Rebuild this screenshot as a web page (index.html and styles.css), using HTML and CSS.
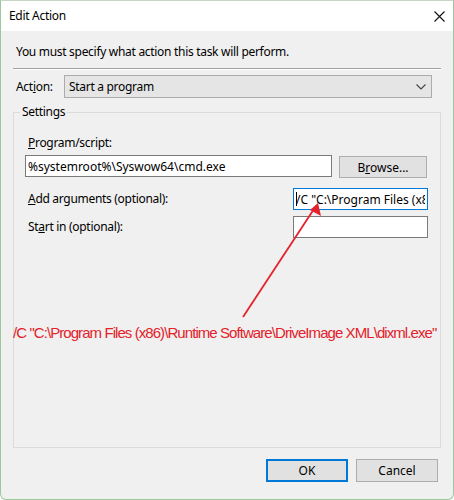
FILE: index.html
```html
<!DOCTYPE html>
<html lang="en">
<head>
    <meta charset="UTF-8">
    <meta name="viewport" content="width=device-width, initial-scale=1.0">
    <title>Edit Action</title>
    <link rel="stylesheet" href="styles.css">
</head>
<body>
   <div class="window">
     <div class="titlebar">
        <span class="title">Edit Action</span>
        <svg class="close" width="11" height="11" viewBox="0 0 11 11">
            <path d="M0.5 0.5 L10.5 10.5 M10.5 0.5 L0.5 10.5" stroke="#111" stroke-width="1.1" fill="none"/>
        </svg>
     </div>
     <div class="content">
        <p class="message">You must specify what action this task will perform.</p>
        <div class="sep"></div>
        <div class="action-row">
            <span class="action-label">Act<u>i</u>on:</span>
            <div class="dropdown">
                <span>Start a program</span>
                <svg width="10" height="6" viewBox="0 0 10 6">
                    <path d="M0.5 0.5 L5 5 L9.5 0.5" stroke="#444" stroke-width="1.1" fill="none"/>
                </svg>
            </div>
        </div>
        <fieldset class="settings">
            <legend>Settings</legend>
            <div class="field-label"><u>P</u>rogram/script:</div>
            <div class="program-row">
                <input class="textbox wide" type="text" value="%systemroot%\Syswow64\cmd.exe">
                <button class="btn browse">B<u>r</u>owse...</button>
            </div>
            <div class="arg-row first">
                <span class="field-label"><u>A</u>dd arguments (optional):</span>
                <span class="caret-wrap">
                    <input class="textbox short focused" type="text" value="/C &quot;C:\Program Files (x86)\Runtime Software\DriveImage XML\dixml.exe&quot;">
                </span>
            </div>
            <div class="arg-row">
                <span class="field-label">St<u>a</u>rt in (optional):</span>
                <input class="textbox short" type="text" value="">
            </div>
        </fieldset>
        <div class="buttons">
            <button class="btn ok">OK</button>
            <button class="btn">Cancel</button>
        </div>
     </div>

     <!-- annotation drawn over the screenshot -->
     <svg class="arrow" width="454" height="500" viewBox="0 0 454 500">
        <line x1="243" y1="317" x2="314" y2="209" stroke="#e3222b" stroke-width="1.8"/>
        <polygon points="318,203 321,216 310,210" fill="#e3222b"/>
     </svg>
     <div class="note">/C "C:\Program Files (x86)\Runtime Software\DriveImage XML\dixml.exe"</div>
   </div>
</body>
</html>
```

FILE: styles.css
```css
*{
    margin: 0;
    padding: 0;
    box-sizing: border-box;
}
body{
    background-color: #ffffff;
    font-family: "Noto Sans", "Open Sans", sans-serif;
    font-size: 12px;
    letter-spacing: -0.3px;
    color: #000;
}
.window{
    position: relative;
    width: 454px;
    height: 500px;
    border: 1px solid #9cc99c;
    border-top-color: #c8d6c8;
    border-radius: 0 0 6px 6px;
    background-color: #f0f0f0;
    overflow: hidden;
}
.titlebar{
    height: 30px;
    background-color: #ffffff;
    display: flex;
    align-items: center;
    justify-content: space-between;
    padding: 0 8px 0 8px;
}
.title{
    line-height: 16px;
}
.content{
    padding: 0 12px;
}
.message{
    height: 37px;
    padding: 13px 0 0 3px;
    line-height: 16px;
}
.sep{
    border-top: 1px solid #a0a0a0;
    border-bottom: 1px solid #ffffff;
}
.action-row{
    display: flex;
    align-items: center;
    margin-top: 5px;
}
.action-label{
    width: 51px;
    padding-left: 3px;
}
.dropdown{
    width: 368px;
    height: 23px;
    background-color: #e5e5e5;
    border: 1px solid #acacac;
    display: flex;
    align-items: center;
    justify-content: space-between;
    padding: 0 5px 0 4px;
}
.settings{
    margin-top: 6px;
    height: 344px;
    width: 428px;
    border: 1px solid #dcdcdc;
    padding: 15px 12px 0 11px;
}
.settings legend{
    margin-left: -5px;
    padding: 0 2px;
    line-height: 16px;
}
.field-label{
    padding-left: 3px;
    line-height: 16px;
}
.program-row{
    display: flex;
    gap: 7px;
    margin-top: 4px;
}
.textbox{
    height: 22px;
    border: 1px solid #7a7a7a;
    background-color: #ffffff;
    font-family: "Noto Sans", "Open Sans", sans-serif;
    font-size: 12px;
    padding: 0 2px;
    outline: none;
}
.wide{
    width: 307px;
}
.short{
    width: 135px;
}
.focused{
    border-color: #0078d7;
}
.caret-wrap{
    position: relative;
    display: block;
}
.caret-wrap::before{
    content: "";
    position: absolute;
    left: 3px;
    top: 4px;
    width: 1px;
    height: 14px;
    background-color: #000;
}
.btn{
    height: 22px;
    width: 82px;
    background-color: #e1e1e1;
    border: 1px solid #adadad;
    font-family: "Noto Sans", "Open Sans", sans-serif;
    font-size: 12px;
    color: #000;
}
.browse{
    width: 88px;
    margin-top: 1px;
}
.arg-row{
    display: flex;
    align-items: center;
    justify-content: space-between;
    margin-top: 6px;
}
.arg-row.first{
    margin-top: 10px;
}
.buttons{
    display: flex;
    justify-content: flex-end;
    gap: 8px;
    margin-top: 11px;
    padding-right: 3px;
}
.buttons .btn{
    height: 23px;
}
.ok{
    border: 2px solid #0078d7;
}
.arrow{
    position: absolute;
    left: -1px;
    top: -1px;
}
.note{
    position: absolute;
    left: 12px;
    top: 322px;
    font-family: "Liberation Sans", Arial, sans-serif;
    font-size: 15px;
    line-height: 20px;
    letter-spacing: -0.93px;
    color: #e3222b;
    white-space: nowrap;
}
```
